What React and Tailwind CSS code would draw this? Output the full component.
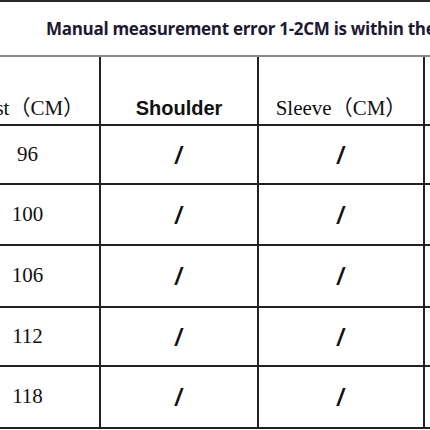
const rows = [
    { bust: "96", h: "h-[59px]" },
    { bust: "100", h: "h-[61px]" },
    { bust: "106", h: "h-[62px]" },
    { bust: "112", h: "h-[59px]" },
    { bust: "118", h: "h-[62px]" },
]

const cell = "border-r-2 border-b-2 border-[#222] flex items-center justify-center"
const serif = "font-['Liberation_Serif','Noto_Sans_CJK_SC',serif]"
const head = "h-[69px] items-end pb-[4px] leading-[24px] text-[#111]"
const slash = "font-['Open_Sans',sans-serif] font-semibold text-[25px] text-[#111]"

function App() {
    return (
        <div className="w-[430px] h-[430px] overflow-hidden bg-white border-t-2 border-[#2a2a2a]">
            <div className="h-[53px] pt-[14px] pl-[46px] whitespace-nowrap">
                <p className="font-['Open_Sans',sans-serif] font-bold text-[17px] tracking-[-0.3px] leading-normal text-[#1e1933]">
                    Manual measurement error 1-2CM is within the range
                </p>
            </div>
            <div className="ml-[-44px] w-[700px] border-t-2 border-[#8a8a8a] grid grid-cols-[145px_158px_166px_231px]">
                <div className={`${cell} ${head} ${serif} text-[21px]`}>
                    Bust（CM）
                </div>
                <div className={`${cell} ${head} font-['Liberation_Sans',sans-serif] font-bold text-[20px]`}>
                    Shoulder
                </div>
                <div className={`${cell} ${head} ${serif} text-[21px]`}>
                    Sleeve（CM）
                </div>
                <div className={`${cell} ${head} ${serif} text-[21px]`}>
                    Length（CM）
                </div>
                {rows.map((r) => (
                    <div key={r.bust} className="contents">
                        <div className={`${cell} ${r.h} ${serif} text-[21px] text-[#111]`}>{r.bust}</div>
                        <div className={`${cell} ${r.h} ${slash}`}>/</div>
                        <div className={`${cell} ${r.h} ${slash}`}>/</div>
                        <div className={`${cell} ${r.h} ${slash}`}>/</div>
                    </div>
                ))}
            </div>
        </div>
    )
}

export default App
